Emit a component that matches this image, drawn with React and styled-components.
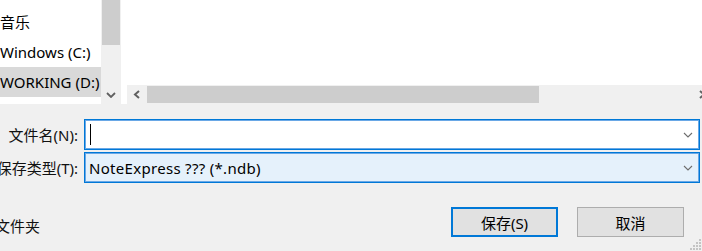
import React from "react";
import styled, { createGlobalStyle } from "styled-components";

const Global = createGlobalStyle`
  html, body { margin: 0; padding: 0; background: #f0f0f0; overflow: hidden; }
  #root { width: 702px; height: 251px; overflow: hidden; }
  * { box-sizing: border-box; }
`;

const Dialog = styled.div`
  position: relative;
  width: 712px;
  height: 251px;
  background: #f0f0f0;
  display: flex;
  flex-direction: column;
  font-family: "Noto Sans", "Noto Sans CJK SC", sans-serif;
  font-size: 15px;
  color: #000;
`;

const Browser = styled.div`
  display: flex;
  height: 104px;
  flex: none;
`;

const NavColumn = styled.div`
  width: 101px;
  background: #fff;
  padding-top: 7px;
  display: flex;
  flex-direction: column;
  overflow: hidden;
`;

const NavItem = styled.div`
  height: 30px;
  line-height: 30px;
  white-space: nowrap;
  padding-left: ${(p) => p.$indent}px;
  background: ${(p) => (p.$selected ? "#d9d9d9" : "transparent")};
`;

const VScroll = styled.div`
  width: 20px;
  background: #f0f0f0;
  display: flex;
  flex-direction: column;
`;

const VThumb = styled.div`
  height: 45px;
  margin: 0 1px 0 1px;
  background: #cdcdcd;
`;

const Fill = styled.div`
  flex: 1;
`;

const ArrowBox = styled.div`
  flex: none;
  width: 20px;
  height: 19px;
  display: flex;
  align-items: center;
  justify-content: center;
`;

const Gutter = styled.div`
  width: 6px;
  background: #fff;
`;

const RightPane = styled.div`
  flex: 1;
  display: flex;
  flex-direction: column;
`;

const Content = styled.div`
  flex: 1;
  background: #fff;
`;

const HScroll = styled.div`
  height: 19px;
  background: #f0f0f0;
  display: flex;
  align-items: stretch;
`;

const HThumb = styled.div`
  width: 392px;
  margin: 1px 0;
  background: #cdcdcd;
`;

const Form = styled.div`
  margin-top: 15px;
  display: flex;
  flex-direction: column;
  gap: 2px;
  padding-right: 12px;
`;

const Row = styled.div`
  display: flex;
  align-items: center;
  height: 31px;
`;

const Label = styled.div`
  width: 78px;
  margin-right: 6px;
  display: flex;
  justify-content: flex-end;
  white-space: nowrap;
  color: #111;
`;

const Combo = styled.div`
  flex: 1;
  height: 31px;
  border: 1px solid #0078d7;
  box-shadow: inset 0 0 0 1px #6aa8e6;
  background: ${(p) => (p.$filled ? "#e5f1fb" : "#fff")};
  display: flex;
  align-items: center;
  padding: 0 6px 0 4px;
`;

const ComboText = styled.span`
  flex: 1;
  white-space: nowrap;
  letter-spacing: 0.3px;
`;

const Caret = styled.span`
  width: 1px;
  height: 21px;
  background: #000;
  margin-left: 1px;
`;

const Footer = styled.div`
  margin-top: 24px;
  display: flex;
  align-items: center;
  padding-right: 28px;
`;

const FolderToggle = styled.div`
  margin-left: -5px;
  margin-top: 7px;
  white-space: nowrap;
  color: #111;
`;

const Buttons = styled.div`
  margin-left: auto;
  display: flex;
  gap: 19px;
`;

const Button = styled.button`
  width: 107px;
  height: 30px;
  background: #e1e1e1;
  border: ${(p) => (p.$default ? "2px solid #0078d7" : "1px solid #adadad")};
  font-family: inherit;
  font-size: 15px;
  color: #000;
  padding: 0;
`;

const Grip = styled.svg`
  position: absolute;
  right: 10px;
  bottom: 0;
`;

const ChevronDown = ({ thick }) => (
  <svg width="10" height="6" viewBox="0 0 10 6">
    <polyline
      points="1,1 5,5 9,1"
      fill="none"
      stroke={thick ? "#606060" : "#6d6d6d"}
      strokeWidth={thick ? 1.8 : 1.1}
    />
  </svg>
);

const ChevronSide = ({ dir }) => (
  <svg width="8" height="9" viewBox="0 0 8 9">
    <polyline
      points={dir === "left" ? "6,1 2,4.5 6,8" : "2,1 6,4.5 2,8"}
      fill="none"
      stroke="#606060"
      strokeWidth="2"
    />
  </svg>
);

export default function App() {
  return (
    <>
      <Global />
      <Dialog>
        <Browser>
          <NavColumn>
            <NavItem $indent={-4}>音乐</NavItem>
            <NavItem $indent={-3}>Windows (C:)</NavItem>
            <NavItem $indent={-4} $selected>WORKING (D:)</NavItem>
          </NavColumn>
          <VScroll>
            <VThumb />
            <Fill />
            <ArrowBox>
              <ChevronDown thick />
            </ArrowBox>
          </VScroll>
          <Gutter />
          <RightPane>
            <Content />
            <HScroll>
              <ArrowBox>
                <ChevronSide dir="left" />
              </ArrowBox>
              <HThumb />
              <Fill />
              <ArrowBox>
                <ChevronSide dir="right" />
              </ArrowBox>
            </HScroll>
          </RightPane>
        </Browser>
        <Form>
          <Row>
            <Label>文件名(N):</Label>
            <Combo>
              <Caret />
              <ComboText />
              <ChevronDown />
            </Combo>
          </Row>
          <Row>
            <Label>保存类型(T):</Label>
            <Combo $filled>
              <ComboText>NoteExpress ??? (*.ndb)</ComboText>
              <ChevronDown />
            </Combo>
          </Row>
        </Form>
        <Footer>
          <FolderToggle>文件夹</FolderToggle>
          <Buttons>
            <Button $default>保存(S)</Button>
            <Button>取消</Button>
          </Buttons>
        </Footer>
        <Grip width="12" height="12" viewBox="0 0 12 12">
          {[
            [9, 0], [9, 3], [6, 3], [9, 6], [6, 6], [3, 6], [9, 9], [6, 9], [3, 9], [0, 9],
          ].map(([x, y], i) => (
            <rect key={i} x={x} y={y} width="2" height="2" fill="#c4c4c4" />
          ))}
        </Grip>
      </Dialog>
    </>
  );
}
